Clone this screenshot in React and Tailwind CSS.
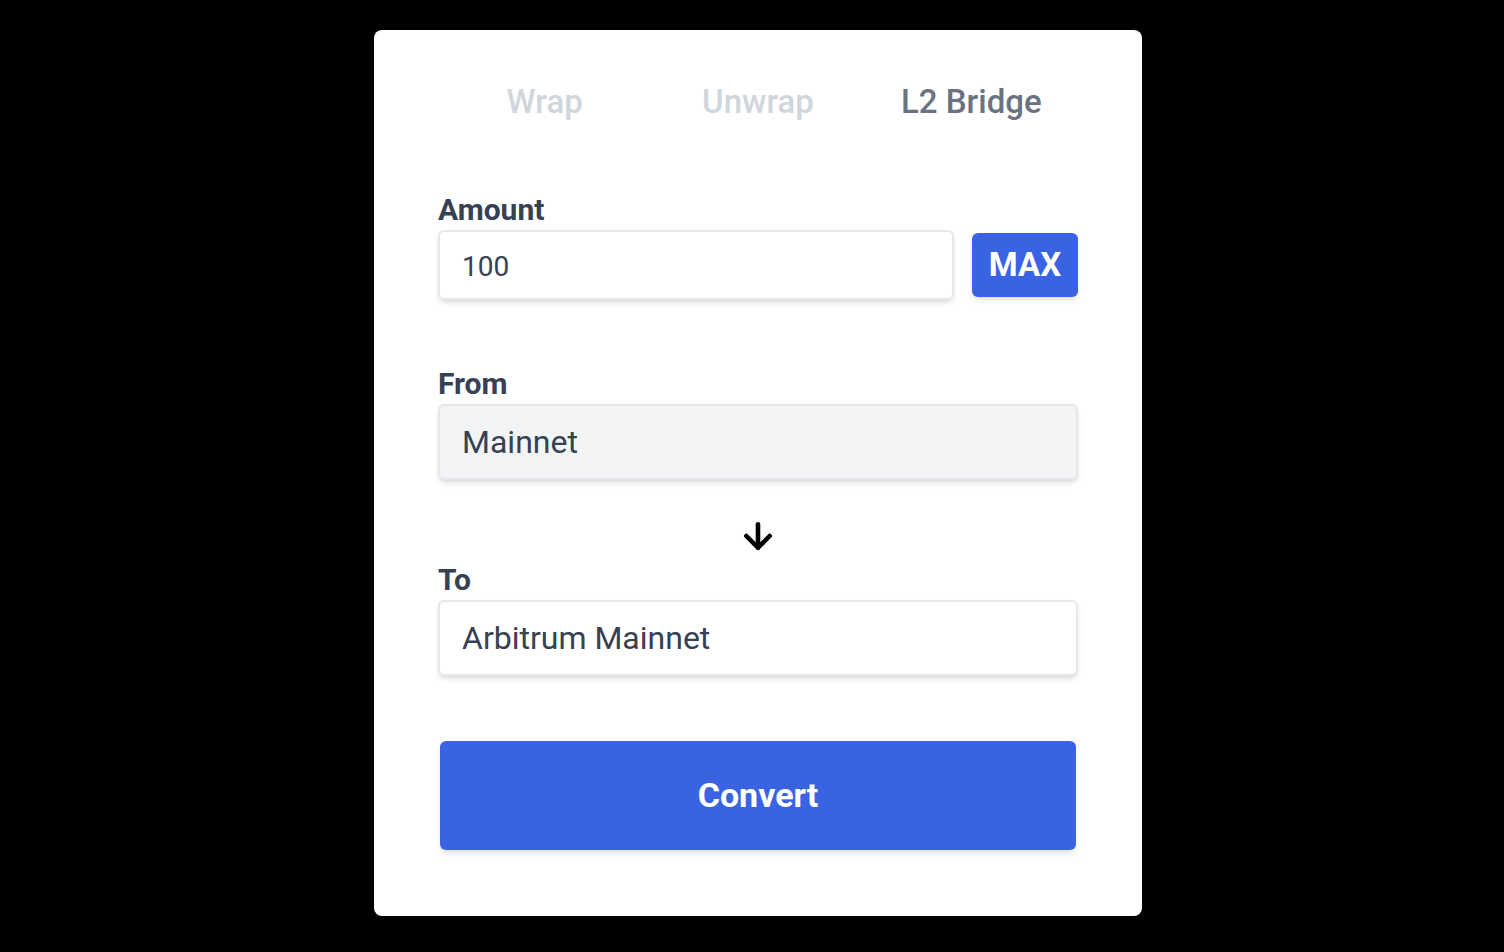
import { ArrowDown } from 'lucide-react';

const font = { fontFamily: 'Roboto, "Noto Sans", sans-serif' };

export default function App() {
  const tabs = [
    { label: 'Wrap', active: false },
    { label: 'Unwrap', active: false },
    { label: 'L2 Bridge', active: true },
  ];

  return (
    <div className="min-h-screen w-full bg-black flex justify-center pt-[30px] pl-[12px]" style={font}>
      <div className="w-[768px] h-[886px] bg-white rounded-lg px-16 pt-[54px]">
        {/* Tabs */}
        <div className="grid grid-cols-3">
          {tabs.map(t => (
            <button
              key={t.label}
              className={`text-[33px] leading-9 font-medium text-center ${t.active ? 'text-gray-500' : 'text-gray-300'}`}
            >
              {t.label}
            </button>
          ))}
        </div>

        {/* Amount */}
        <div className="mt-[74px]">
          <label className="block text-[30px] leading-8 font-bold text-gray-700">Amount</label>
          <div className="flex items-center mt-1 gap-[18px]">
            <div className="flex-1 h-[70px] border-2 border-gray-200 rounded-md shadow-md flex items-center pl-[22px] pt-[3px] text-[28px] text-gray-700">
              100
            </div>
            <button className="w-[106px] h-[64px] bg-[#3a63e4] rounded-md shadow-md text-white text-[33px] font-bold">
              MAX
            </button>
          </div>
        </div>

        {/* From */}
        <div className="mt-[68px]">
          <label className="block text-[30px] leading-8 font-bold text-gray-700">From</label>
          <div className="mt-1 h-[76px] border-2 border-gray-200 rounded-md shadow-md bg-gray-100 flex items-center pl-[22px] text-[32px] text-gray-700">
            Mainnet
          </div>
        </div>

        <div className="flex justify-center mt-[36px]">
          <ArrowDown className="w-[40px] h-[40px] text-black" strokeWidth={2.75} />
        </div>

        {/* To */}
        <div className="mt-[8px]">
          <label className="block text-[30px] leading-8 font-bold text-gray-700">To</label>
          <div className="mt-1 h-[76px] border-2 border-gray-200 rounded-md shadow-md bg-white flex items-center pl-[22px] text-[32px] text-gray-700">
            Arbitrum Mainnet
          </div>
        </div>

        <div className="mt-[65px] px-[2px]">
          <button className="w-full h-[109px] bg-[#3a63e4] rounded-md shadow-md text-white text-[34px] font-bold">
            Convert
          </button>
        </div>
      </div>
    </div>
  );
}
